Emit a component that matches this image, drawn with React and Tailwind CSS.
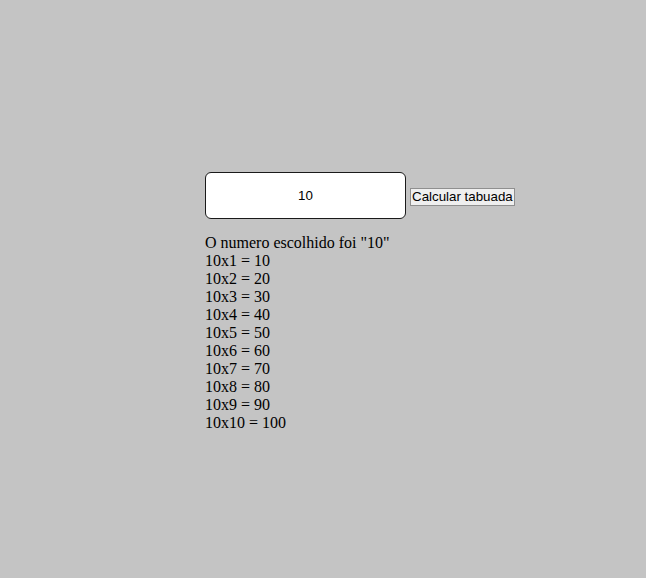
export default function App() {
  const n = 10;
  const rows = Array.from({ length: 10 }, (_, i) => i + 1);
  return (
    <div className="min-h-screen w-full bg-[#c4c4c4] pl-[205px] pt-[172px]">
      <div className="flex items-center gap-[4px]">
        <div className="flex h-[47px] w-[201px] items-center justify-center rounded-[6px] border border-[#1a1a1a] bg-white text-[13.33px] text-black [font-family:'Liberation_Sans',Arial,sans-serif]">
          10
        </div>
        <button className="mt-[2px] flex h-[18px] items-center border border-[#8f8f8f] bg-[#efefef] px-[1px] text-[13.33px] leading-none text-black [font-family:'Liberation_Sans',Arial,sans-serif]">
          Calcular tabuada
        </button>
      </div>
      <div className="mt-[15px] text-[16px] leading-[18px] text-black [font-family:'Liberation_Serif','Times_New_Roman',serif]">
        <div>O numero escolhido foi "{n}"</div>
        {rows.map((i) => (
          <div key={i}>
            {n}x{i} = {n * i}
          </div>
        ))}
      </div>
    </div>
  );
}
